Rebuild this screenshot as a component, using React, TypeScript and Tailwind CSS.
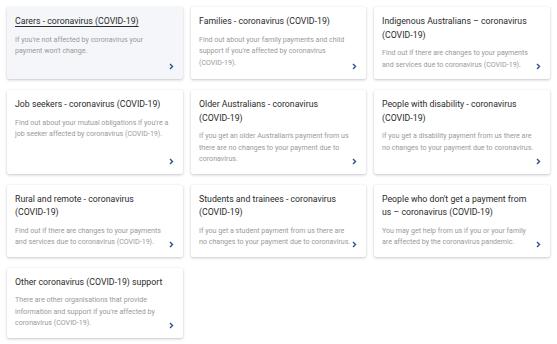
import React from "react";

const cards = [
  { t: "Carers - coronavirus (COVID-19)", d: "If you're not affected by coronavirus your payment won't change.", active: true },
  { t: "Families - coronavirus (COVID-19)", d: "Find out about your family payments and child support if you're affected by coronavirus (COVID-19)." },
  { t: "Indigenous Australians \u2013 coronavirus (COVID-19)", d: "Find out if there are changes to your payments and services due to coronavirus (COVID-19)." },
  { t: "Job seekers - coronavirus (COVID-19)", d: "Find out about your mutual obligations if you're a job seeker affected by coronavirus (COVID-19)." },
  { t: "Older Australians - coronavirus (COVID-19)", d: "If you get an older Australian's payment from us there are no changes to your payment due to coronavirus." },
  { t: "People with disability - coronavirus (COVID-19)", d: "If you get a disability payment from us there are no changes to your payment due to coronavirus." },
  { t: "Rural and remote - coronavirus (COVID-19)", d: "Find out if there are changes to your payments and services due to coronavirus (COVID-19)." },
  { t: "Students and trainees - coronavirus (COVID-19)", d: "If you get a student payment from us there are no changes to your payment due to coronavirus." },
  { t: "People who don't get a payment from us \u2013 coronavirus (COVID-19)", d: "You may get help from us if you or your family are affected by the coronavirus pandemic." },
  { t: "Other coronavirus (COVID-19) support", d: "There are other organisations that provide information and support if you're affected by coronavirus (COVID-19)." },
];

function NoBreakCovid({ text }: { text: string }) {
  const parts = text.split(/(\(COVID-19\)\.?)/);
  return (
    <>
      {parts.map((p, i) =>
        p.startsWith("(COVID-19)") ? (
          <span key={i} className="whitespace-nowrap">
            {p}
          </span>
        ) : (
          <React.Fragment key={i}>{p}</React.Fragment>
        )
      )}
    </>
  );
}

function Chevron() {
  return (
    <svg width="5" height="7" viewBox="0 0 5 7" className="shrink-0">
      <path d="M1 1 L3.5 3.5 L1 6" fill="none" stroke="#2c4f8f" strokeWidth="1.4" />
    </svg>
  );
}

export default function App() {
  return (
    <div
      className="w-[557px] h-[344px] bg-white pl-[7px] pt-[7px] overflow-hidden"
      style={{ fontFamily: "Roboto, 'Liberation Sans', sans-serif" }}
    >
      <div className="grid grid-cols-[176px_175px_176px] gap-x-[8px] gap-y-[11px]">
        {cards.map((c, i) => (
          <div
            key={i}
            className={`flex items-end rounded-[2px] pl-[8px] pr-[9px] pt-[8px] pb-[9px] shadow-[0_1px_3px_rgba(0,0,0,0.22),0_0_1px_rgba(0,0,0,0.08)] ${
              c.active ? "bg-[#f4f6f9]" : "bg-white"
            }`}
          >
            <div className="flex-1 min-w-0 self-start">
              <div
                className={`pr-[5px] text-[8.75px] leading-[13.5px] text-[#2b2b2b] ${c.active ? "underline underline-offset-[1.5px]" : ""}`}
              >
                <NoBreakCovid text={c.t} />
              </div>
              <div className="mt-[5px] text-[7.1px] leading-[11.5px] text-[#9a9a9a]">
                <NoBreakCovid text={c.d} />
              </div>
            </div>
            <Chevron />
          </div>
        ))}
      </div>
    </div>
  );
}
